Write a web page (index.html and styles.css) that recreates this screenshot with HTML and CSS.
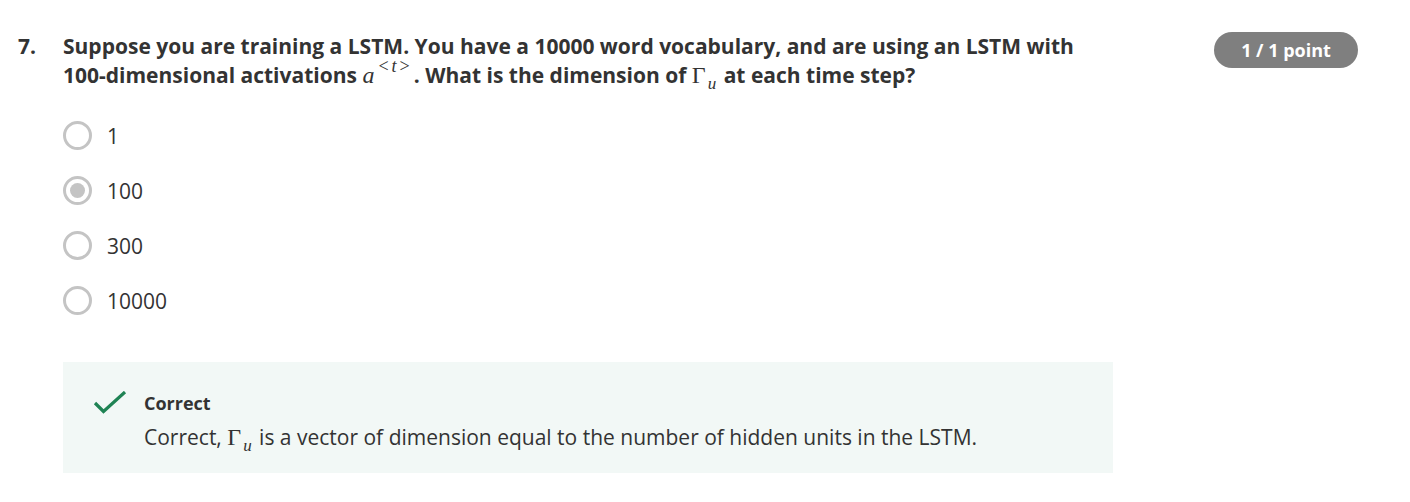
FILE: index.html
```html
<!DOCTYPE html>
<html>
<head>
<meta charset="utf-8">
<link rel="stylesheet" href="styles.css">
</head>
<body>
<div class="question">
  <div class="num">7.</div>
  <div class="content">
    <div class="prompt">Suppose you are training a LSTM. You have a 10000 word vocabulary, and are using an LSTM with 100-dimensional activations <span class="math"><i>a</i><sup class="sup"><span class="rel">&lt;</span><i>t</i><span class="rel">&gt;</span></sup></span>. What is the dimension of <span class="math">Γ<sub class="sub"><i>u</i></sub></span> at each time step?</div>
    <div class="options">
      <label class="option"><span class="radio"></span><span class="label">1</span></label>
      <label class="option"><span class="radio checked"></span><span class="label">100</span></label>
      <label class="option"><span class="radio"></span><span class="label">300</span></label>
      <label class="option"><span class="radio"></span><span class="label">10000</span></label>
    </div>
    <div class="feedback">
      <svg class="check" width="34" height="24" viewBox="0 0 34 24"><path d="M2 12 L10.5 20.5 L32 1" fill="none" stroke="#1f8354" stroke-width="3.2"/></svg>
      <div class="fb-text">
        <div class="fb-title">Correct</div>
        <div class="fb-body">Correct, <span class="math">Γ<sub class="sub"><i>u</i></sub></span> is a vector of dimension equal to the number of hidden units in the LSTM.</div>
      </div>
    </div>
  </div>
  <div class="badge">1 / 1 point</div>
</div>
</body>
</html>
```
FILE: styles.css
```css
body {
  margin: 0;
  background: #ffffff;
  font-family: "Open Sans", "Liberation Sans", sans-serif;
  color: #333333;
}
.question {
  display: flex;
  padding: 32px 52px 0 18px;
}
.num {
  width: 45px;
  flex: none;
  font-weight: 700;
  font-size: 21px;
  line-height: 29px;
}
.content {
  width: 1050px;
  flex: none;
}
.prompt {
  font-weight: 700;
  font-size: 21px;
  line-height: 29px;
}
.math {
  font-family: "Liberation Serif", "DejaVu Serif", serif;
  font-weight: 400;
  font-size: 24px;
  line-height: 0;
}
.math i {
  font-style: italic;
}
.sup {
  font-size: 18px;
  vertical-align: 11px;
  line-height: 0;
  margin-left: 1px;
  margin-right: 1px;
}
.rel {
  margin: 0 3px;
}
.sub {
  font-size: 17px;
  vertical-align: -6px;
  line-height: 0;
  margin-left: 2px;
  margin-right: 2px;
}
.options {
  display: flex;
  flex-direction: column;
  gap: 26px;
  padding-top: 31px;
}
.option {
  display: flex;
  align-items: center;
  gap: 15px;
  height: 29px;
}
.radio {
  width: 29px;
  height: 29px;
  box-sizing: border-box;
  border: 3px solid #c4c4c4;
  border-radius: 50%;
  display: flex;
  align-items: center;
  justify-content: center;
  flex: none;
}
.radio.checked::after {
  content: "";
  width: 15px;
  height: 15px;
  border-radius: 50%;
  background: #c4c4c4;
}
.label {
  font-size: 21px;
}
.feedback {
  margin-top: 47px;
  background: #f2f8f6;
  display: flex;
  gap: 17px;
  padding: 29px 0 0 30px;
  height: 111px;
  box-sizing: border-box;
}
.check {
  flex: none;
  margin-top: 0;
}
.fb-title {
  font-weight: 700;
  font-size: 18px;
  line-height: 24px;
}
.fb-body {
  font-size: 21px;
  line-height: 30px;
  margin-top: 7px;
}
.badge {
  margin-left: auto;
  width: 144px;
  height: 36px;
  border-radius: 18px;
  background: #7f7f7f;
  color: #ffffff;
  font-weight: 700;
  font-size: 18px;
  display: flex;
  align-items: center;
  justify-content: center;
  flex: none;
}
```
